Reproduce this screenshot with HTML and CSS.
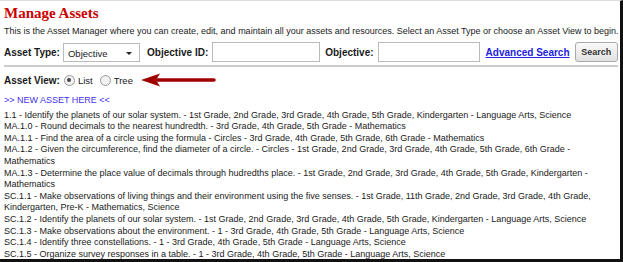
FILE: index.html
```html
<!DOCTYPE html>
<html lang="en">
<head>
    <meta charset="UTF-8">
    <title>Manage Assets</title>
    <link rel="stylesheet" href="styles.css">
</head>
<body>
    <div class="frame">
        <h1 class="title">Manage Assets</h1>
        <p class="intro">This is the Asset Manager where you can create, edit, and maintain all your assets and resources. Select an Asset Type or choose an Asset View to begin.</p>

        <!-- Filtros -->
        <div class="search-row">
            <label class="field-label">Asset Type:</label>
            <div class="select-box">
                <span>Objective</span>
                <span class="caret"></span>
            </div>
            <label class="field-label">Objective ID:</label>
            <input type="text" class="text-input id-input">
            <label class="field-label">Objective:</label>
            <input type="text" class="text-input obj-input">
            <a href="#" class="adv-link">Advanced Search</a>
            <button class="search-btn">Search</button>
        </div>

        <div class="view-row">
            <span class="field-label">Asset View:</span>
            <span class="radio checked"></span>
            <span class="radio-label">List</span>
            <span class="radio"></span>
            <span class="radio-label">Tree</span>
            <svg class="arrow" width="76" height="16" viewBox="0 0 76 16">
                <path d="M14 8 H74" stroke="#a00000" stroke-width="3.4" stroke-linecap="round"/>
                <path d="M1 8 L20 1.5 L16 8 L20 14.5 Z" fill="#a00000"/>
            </svg>
        </div>

        <!-- Lista de assets -->
        <div class="asset-list">
            <a href="#" class="new-link">&gt;&gt; NEW ASSET HERE &lt;&lt;</a>
            <div>1.1 - Identify the planets of our solar system. - 1st Grade, 2nd Grade, 3rd Grade, 4th Grade, 5th Grade, Kindergarten - Language Arts, Science</div>
            <div>MA.1.0 - Round decimals to the nearest hundredth. - 3rd Grade, 4th Grade, 5th Grade - Mathematics</div>
            <div>MA.1.1 - Find the area of a circle using the formula - Circles - 3rd Grade, 4th Grade, 5th Grade, 6th Grade - Mathematics</div>
            <div>MA.1.2 - Given the circumference, find the diameter of a circle. - Circles - 1st Grade, 2nd Grade, 3rd Grade, 4th Grade, 5th Grade, 6th Grade - Mathematics</div>
            <div>MA.1.3 - Determine the place value of decimals through hudredths place. - 1st Grade, 2nd Grade, 3rd Grade, 4th Grade, 5th Grade, Kindergarten - Mathematics</div>
            <div>SC.1.1 - Make observations of living things and their environment using the five senses. - 1st Grade, 11th Grade, 2nd Grade, 3rd Grade, 4th Grade, Kindergarten, Pre-K - Mathematics, Science</div>
            <div>SC.1.2 - Identify the planets of our solar system. - 1st Grade, 2nd Grade, 3rd Grade, 4th Grade, 5th Grade, Kindergarten - Language Arts, Science</div>
            <div>SC.1.3 - Make observations about the environment. - 1 - 3rd Grade, 4th Grade, 5th Grade - Language Arts, Science</div>
            <div>SC.1.4 - Identify three constellations. - 1 - 3rd Grade, 4th Grade, 5th Grade - Language Arts, Science</div>
            <div>SC.1.5 - Organize survey responses in a table. - 1 - 3rd Grade, 4th Grade, 5th Grade - Language Arts, Science</div>
        </div>
    </div>
</body>
</html>
```

FILE: styles.css
```css
body {
    margin: 0;
    font-family: "Liberation Sans", Arial, sans-serif;
    background: #fff;
    color: #1a1a1a;
}
.frame {
    width: 616px;
    height: 258px;
    padding: 0 0 0 4px;
    border-top: 1px solid #ddd;
    border-right: 3px solid #111;
    border-bottom: 3px solid #111;
    overflow: hidden;
}
.title {
    margin: 3px 0 0;
    font-family: "Liberation Serif", Georgia, serif;
    font-size: 15px;
    color: #cc0000;
    line-height: 18px;
}
.intro {
    margin: 3px 0 0;
    font-size: 9px;
    line-height: 12px;
    white-space: nowrap;
}
.search-row {
    display: flex;
    align-items: center;
    margin-top: 3px;
    margin-right: 2px;
    height: 24px;
    padding-bottom: 1px;
    border-bottom: 2px solid #ccc;
    white-space: nowrap;
}
.field-label {
    font-weight: bold;
    font-size: 10px;
    margin-right: 4px;
    white-space: nowrap;
}
.select-box {
    width: 81px;
    height: 19px;
    border: 1px solid #bbb;
    display: flex;
    align-items: center;
    justify-content: space-between;
    padding: 2px 7px 0 4px;
    box-sizing: border-box;
    font-size: 9.5px;
    margin: 0 7px 0 -1px;
}
.caret {
    width: 0;
    height: 0;
    border-left: 3px solid transparent;
    border-right: 3px solid transparent;
    border-top: 3px solid #222;
}
.text-input {
    height: 20px;
    box-sizing: border-box;
    border: 1px solid #bbb;
    margin: 0 5px 0 0;
    padding: 0;
}
.id-input {
    width: 108px;
}
.obj-input {
    width: 102px;
    margin: 0 6px 0 0;
}
.adv-link {
    color: #2222dd;
    font-weight: bold;
    font-size: 10px;
    margin-right: 5px;
}
.search-btn {
    width: 46px;
    height: 20px;
    font-family: "Liberation Sans", Arial, sans-serif;
    font-size: 9px;
    font-weight: bold;
    color: #333;
    border: 1px solid #aaa;
    border-radius: 3px;
    background: linear-gradient(#fafafa, #e2e2e2);
    padding: 0;
}
.view-row {
    display: flex;
    align-items: center;
    margin-top: 5px;
    height: 16px;
}
.radio {
    width: 9px;
    height: 9px;
    border: 1px solid #999;
    border-radius: 50%;
    background: #f2f2f2;
    margin: 0 3px 0 0;
    position: relative;
}
.radio.checked::after {
    content: "";
    position: absolute;
    left: 2.5px;
    top: 2.5px;
    width: 4px;
    height: 4px;
    border-radius: 50%;
    background: #444;
}
.radio-label {
    font-size: 9.5px;
    margin-right: 7px;
}
.arrow {
    margin-left: 0;
}
.asset-list {
    margin-top: 7px;
    font-size: 9px;
    line-height: 11.6px;
}
.new-link {
    display: block;
    color: #4433ee;
    text-decoration: none;
    margin-bottom: 3px;
}
```
